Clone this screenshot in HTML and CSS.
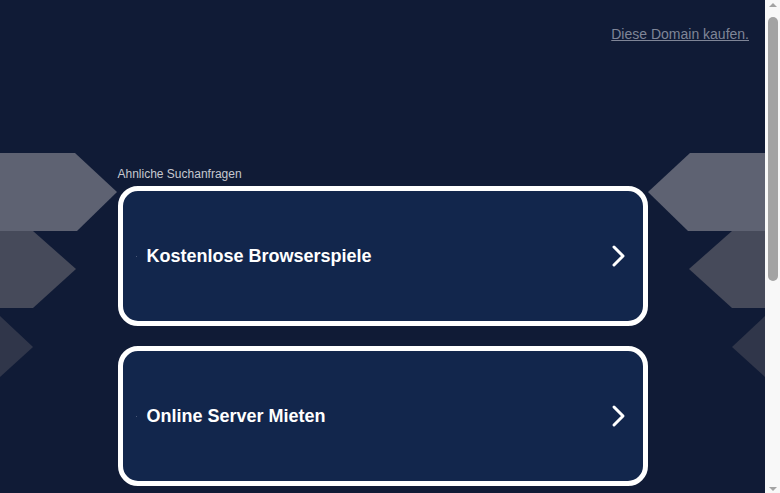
FILE: index.html
```html
<!DOCTYPE html>
<html lang="de">
<head>
<meta charset="utf-8">
<title>Domain</title>
<link rel="stylesheet" href="styles.css">
</head>
<body>
<div class="page">
  <header class="top">
    <a class="buy" href="#">Diese Domain kaufen.</a>
  </header>
  <main class="stage">
    <svg class="deco deco-left" width="120" height="240" viewBox="0 0 120 240" aria-hidden="true">
      <polygon points="0,0 75,0 117,39 77,78 0,78" fill="#5e6272"/>
      <polygon points="0,78 33,78 76,116 33,155 0,155" fill="#464a5a"/>
      <polygon points="0,163 33,194 0,224" fill="#30364a"/>
    </svg>
    <svg class="deco deco-right" width="120" height="240" viewBox="0 0 120 240" aria-hidden="true">
      <polygon points="120,0 45,0 3,39 43,78 120,78" fill="#5e6272"/>
      <polygon points="120,78 87,78 44,116 87,155 120,155" fill="#464a5a"/>
      <polygon points="120,163 87,194 120,224" fill="#30364a"/>
    </svg>
    <section class="column">
      <p class="label">Ahnliche Suchanfragen</p>
      <a class="card" href="#">
        <span class="dot"></span>
        <span class="card-text">Kostenlose Browserspiele</span>
        <svg class="chev" width="16" height="24" viewBox="0 0 16 24" aria-hidden="true"><polyline points="3,3 12,12 3,21" fill="none" stroke="#fff" stroke-width="3" stroke-linecap="round" stroke-linejoin="round"/></svg>
      </a>
      <a class="card" href="#">
        <span class="dot"></span>
        <span class="card-text">Online Server Mieten</span>
        <svg class="chev" width="16" height="24" viewBox="0 0 16 24" aria-hidden="true"><polyline points="3,3 12,12 3,21" fill="none" stroke="#fff" stroke-width="3" stroke-linecap="round" stroke-linejoin="round"/></svg>
      </a>
    </section>
  </main>
</div>
<div class="scrollbar" aria-hidden="true">
  <div class="sb-btn"><span class="tri tri-up"></span></div>
  <div class="sb-track"><div class="sb-thumb"></div></div>
  <div class="sb-btn"><span class="tri tri-down"></span></div>
</div>
</body>
</html>
```

FILE: styles.css
```css
html, body {
  margin: 0;
  padding: 0;
  height: 493px;
  overflow: hidden;
}
body {
  font-family: "Liberation Sans", Arial, sans-serif;
  display: flex;
  background: #101b36;
}
.page {
  flex: 1;
  height: 493px;
  overflow: hidden;
  background: #101b36;
}
.top {
  padding: 26px 16px 0 0;
  text-align: right;
  line-height: 16px;
  height: 16px;
}
.buy {
  font-size: 14px;
  color: #7f8597;
  text-decoration: underline;
}
.stage {
  position: relative;
  margin-top: 111px;
}
.deco {
  position: absolute;
  top: 0;
}
.deco-left { left: 0; }
.deco-right { right: 0; }
.column {
  position: relative;
  width: 530px;
  margin: 0 auto;
  padding-top: 14px;
}
.label {
  margin: 0 0 5px 0;
  font-size: 12px;
  line-height: 14px;
  color: #c6c8cf;
}
.card {
  box-sizing: border-box;
  height: 140px;
  margin-bottom: 20px;
  border: 5px solid #ffffff;
  border-radius: 20px;
  background: #12264c;
  display: flex;
  align-items: center;
  padding: 0 16px 0 13px;
  text-decoration: none;
  color: #ffffff;
}
.dot {
  width: 1px;
  height: 1px;
  background: #4a5878;
  margin-right: 10px;
}
.card-text {
  flex: 1;
  font-size: 18px;
  font-weight: bold;
  line-height: 22px;
}
.chev {
  display: block;
}
.scrollbar {
  width: 15px;
  height: 493px;
  background: #f8f8f8;
  display: flex;
  flex-direction: column;
}
.sb-btn {
  height: 15px;
  display: flex;
  align-items: center;
  justify-content: center;
}
.tri {
  width: 0;
  height: 0;
  border-left: 4px solid transparent;
  border-right: 4px solid transparent;
}
.tri-up {
  border-bottom: 4px solid #a3a3a3;
  margin-top: -6px;
}
.tri-down {
  border-top: 4px solid #a3a3a3;
  margin-top: 6px;
}
.sb-track {
  flex: 1;
  padding: 2px 2px 0 3px;
}
.sb-thumb {
  height: 264px;
  border-radius: 5px;
  background: #a3a3a3;
}
```
